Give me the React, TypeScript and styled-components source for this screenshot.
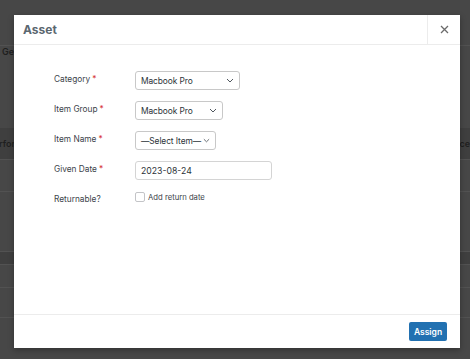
import React from "react";
import styled, { createGlobalStyle } from "styled-components";

const Global = createGlobalStyle`
  html, body { margin: 0; padding: 0; }
  body {
    width: 470px; height: 359px; overflow: hidden;
    background: #474747;
    font-family: Inter, "Liberation Sans", sans-serif;
  }
`;

const Page = styled.div`
  position: relative;
  width: 470px;
  height: 359px;
  overflow: hidden;
  background: #474747;
`;

const BgRow = styled.div<{ $h: number; $band?: boolean; $line?: boolean }>`
  height: ${(p) => p.$h}px;
  background: ${(p) => (p.$band ? "#3f3f3f" : "#474747")};
  border-bottom: ${(p) => (p.$line ? "1px solid #525252" : "none")};
  display: flex;
  align-items: center;
  justify-content: space-between;
  font-size: 9px;
  font-weight: 600;
  color: #1f1f1f;
  white-space: nowrap;
`;

const BgText = styled.span<{ $indent?: number }>`
  margin-left: ${(p) => p.$indent ?? 0}px;
`;

const Modal = styled.div`
  position: absolute;
  left: 14px;
  top: 15px;
  width: 446px;
  height: 333px;
  background: #fff;
  display: flex;
  flex-direction: column;
  box-shadow: 0 2px 6px rgba(0, 0, 0, 0.3);
`;

const Header = styled.div`
  height: 30px;
  display: flex;
  align-items: stretch;
  border-bottom: 1px solid #ececec;
  box-sizing: border-box;
`;

const Title = styled.h1`
  flex: 1;
  margin: 0;
  padding-left: 9px;
  display: flex;
  align-items: center;
  font-size: 12px;
  font-weight: 700;
  color: #5b6770;
`;

const Close = styled.button`
  width: 33px;
  border: none;
  border-left: 1px solid #ececec;
  background: #fff;
  color: #666;
  display: flex;
  align-items: center;
  justify-content: center;
  padding: 0;
`;

const Body = styled.div`
  flex: 1;
  padding: 26px 0 0 40px;
  display: grid;
  grid-template-columns: 81px auto;
  grid-auto-rows: min-content;
  row-gap: 11px;
  align-content: start;
`;

const Label = styled.div`
  font-size: 8.3px;
  color: #3c434a;
  padding-top: 2px;
  line-height: 12px;
  white-space: nowrap;
`;

const Req = styled.span`
  color: #d63638;
  margin-left: 2px;
`;

const Select = styled.div<{ $w: number }>`
  width: ${(p) => p.$w}px;
  height: 19px;
  box-sizing: border-box;
  border: 1px solid #c8c8c8;
  border-radius: 3px;
  display: flex;
  align-items: center;
  justify-content: space-between;
  gap: 2px;
  padding: 0 5px 0 5px;
  font-size: 8.4px;
  letter-spacing: -0.08px;
  color: #2c3338;
  white-space: nowrap;
`;

const DateInput = styled.div`
  width: 137px;
  height: 19px;
  box-sizing: border-box;
  border: 1px solid #d4d4d4;
  border-radius: 3px;
  display: flex;
  align-items: center;
  padding-left: 5px;
  font-size: 8.7px;
  color: #2c3338;
`;

const CheckRow = styled.div`
  display: flex;
  align-items: center;
  gap: 3px;
  font-size: 7.7px;
  color: #3c434a;
  height: 12px;
`;

const Box = styled.span`
  width: 10px;
  height: 10px;
  box-sizing: border-box;
  border: 1px solid #c3c4c7;
  border-radius: 2px;
`;

const Footer = styled.div`
  height: 34px;
  border-top: 1px solid #ececec;
  box-sizing: border-box;
  display: flex;
  align-items: center;
  justify-content: flex-end;
  padding-right: 13px;
`;

const Button = styled.button`
  width: 38px;
  height: 19px;
  padding: 0;
  border: none;
  border-radius: 2px;
  background: #2271b1;
  color: #fff;
  font-family: inherit;
  font-size: 8.5px;
  font-weight: 600;
`;

const Chevron = () => (
  <svg width="8" height="5" viewBox="0 0 8 5" fill="none">
    <path d="M1 1l3 3 3-3" stroke="#50575e" strokeWidth="1" />
  </svg>
);

const X = () => (
  <svg width="9" height="9" viewBox="0 0 9 9">
    <path d="M1 1l7 7M8 1L1 8" stroke="#6b6b6b" strokeWidth="1.3" />
  </svg>
);

export default function App() {
  return (
    <Page>
      <Global />
      <BgRow $h={45} $line />
      <BgRow $h={10}>
        <BgText $indent={2}>Ge</BgText>
      </BgRow>
      <BgRow $h={72} />
      <BgRow $h={31} $band $line>
        <BgText $indent={-1}>rformance</BgText>
        <BgText>Balance</BgText>
      </BgRow>
      <BgRow $h={31} $line />
      <BgRow $h={59} $line />
      <BgRow $h={12} $band $line />
      <BgRow $h={22} $line />
      <BgRow $h={29} $line />
      <BgRow $h={40} />

      <Modal>
        <Header>
          <Title>Asset</Title>
          <Close>
            <X />
          </Close>
        </Header>
        <Body>
          <Label>
            Category<Req>*</Req>
          </Label>
          <Select $w={105}>
            Macbook Pro
            <Chevron />
          </Select>
          <Label>
            Item Group<Req>*</Req>
          </Label>
          <Select $w={88}>
            Macbook Pro
            <Chevron />
          </Select>
          <Label>
            Item Name<Req>*</Req>
          </Label>
          <Select $w={81}>
            —Select Item—
            <Chevron />
          </Select>
          <Label>
            Given Date<Req>*</Req>
          </Label>
          <DateInput>2023-08-24</DateInput>
          <Label>Returnable?</Label>
          <CheckRow>
            <Box />
            Add return date
          </CheckRow>
        </Body>
        <Footer>
          <Button>Assign</Button>
        </Footer>
      </Modal>
    </Page>
  );
}
